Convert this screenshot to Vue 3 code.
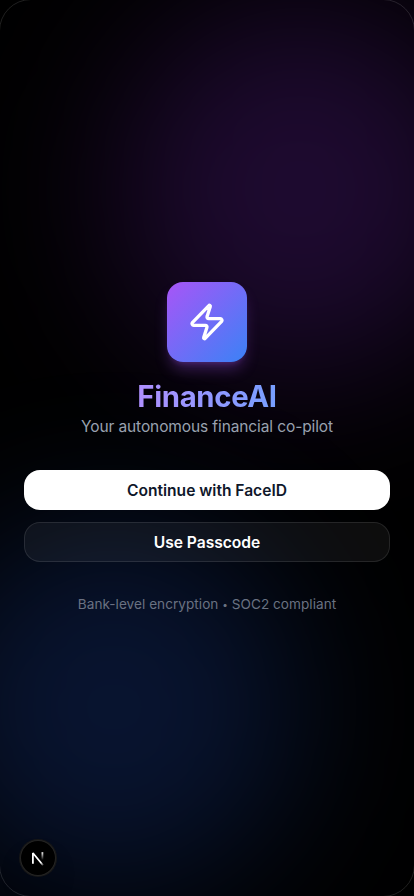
<script setup>
const title = 'FinanceAI'
</script>

<template>
  <div class="device">
    <div class="glow glow-purple"></div>
    <div class="glow glow-blue"></div>
    <main class="content">
      <header class="brand">
        <div class="logo">
          <svg width="40" height="40" viewBox="0 0 24 24" fill="none" stroke="currentColor" stroke-width="2" stroke-linecap="round" stroke-linejoin="round" aria-hidden="true">
            <path d="M4 14a1 1 0 0 1-.78-1.63l9.9-10.2a.5.5 0 0 1 .86.46l-1.92 6.02A1 1 0 0 0 13 10h7a1 1 0 0 1 .78 1.63l-9.9 10.2a.5.5 0 0 1-.86-.46l1.92-6.02A1 1 0 0 0 11 14z" />
          </svg>
        </div>
        <div class="heading">
          <h1>{{ title }}</h1>
          <p class="tagline">Your autonomous financial co-pilot</p>
        </div>
      </header>
      <div class="actions">
        <button class="btn primary">Continue with FaceID</button>
        <button class="btn secondary">Use Passcode</button>
      </div>
      <p class="note">Bank-level encryption <span class="dot">•</span> SOC2 compliant</p>
    </main>
    <div class="frame"></div>
    <div class="dev-badge">
      <svg width="36" height="36" viewBox="0 0 36 36" fill="none" aria-hidden="true">
        <defs>
          <linearGradient id="diag" x1="18" y1="17" x2="24.5" y2="25" gradientUnits="userSpaceOnUse">
            <stop stop-color="#fff" />
            <stop offset=".6" stop-color="#fff" />
            <stop offset="1" stop-color="#fff" stop-opacity="0.1" />
          </linearGradient>
          <linearGradient id="stem" x1="22" y1="12" x2="22" y2="20" gradientUnits="userSpaceOnUse">
            <stop stop-color="#fff" />
            <stop offset="1" stop-color="#fff" stop-opacity="0" />
          </linearGradient>
        </defs>
        <path d="M12.9 23.8V13L23 25.3" stroke="url(#diag)" stroke-width="1.8" stroke-linejoin="bevel" />
        <path d="M22.4 12.2V20.5" stroke="url(#stem)" stroke-width="1.8" />
      </svg>
    </div>
  </div>
</template>

<style>
body { background: #000; }
</style>

<style scoped>
.device {
  position: relative;
  box-sizing: border-box;
  width: 100%;
  height: 100vh;
  overflow: hidden;
  display: flex;
  flex-direction: column;
  justify-content: center;
  padding: 0 24px;
  background: #000;
  font-family: Inter, "Liberation Sans", sans-serif;
  color: #fff;
}
.glow {
  position: absolute;
  width: 372px;
  height: 372px;
  border-radius: 50%;
  filter: blur(76px);
}
.glow-purple { top: 3px; right: -72px; background: rgba(147, 51, 234, 0.205); }
.glow-blue { bottom: 3px; left: -72px; background: rgba(37, 99, 235, 0.205); }
.content {
  position: relative;
  display: flex;
  flex-direction: column;
  text-align: center;
}
.brand {
  display: flex;
  flex-direction: column;
  align-items: center;
}
.logo {
  width: 80px;
  height: 80px;
  display: flex;
  align-items: center;
  justify-content: center;
  border-radius: 16px;
  background: linear-gradient(to bottom right, #a855f7, #3b82f6);
  box-shadow: 0 10px 15px -3px rgba(168, 85, 247, 0.3), 0 4px 6px -4px rgba(168, 85, 247, 0.3);
}
.heading { margin-top: 16px; }
h1 {
  margin: 0;
  font-size: 29.3px;
  line-height: 38px;
  font-weight: 700;
  letter-spacing: -0.33px;
  background: linear-gradient(to right, #c68aff, #60a5ff);
  background-clip: text;
  color: transparent;
}
.tagline {
  margin: 0;
  font-size: 15.5px;
  line-height: 22px;
  letter-spacing: -0.11px;
  color: #99a1af;
}
.actions {
  display: flex;
  flex-direction: column;
  gap: 12px;
  margin-top: 32px;
}
.btn {
  box-sizing: border-box;
  height: 40px;
  padding: 2px 0 0;
  border: 0;
  border-radius: 16px;
  font: 600 15.6px/24px Inter, "Liberation Sans", sans-serif;
  letter-spacing: -0.02px;
}
.primary { background: #fff; color: #0f172a; }
.secondary {
  background: rgba(255, 255, 255, 0.05);
  border: 1px solid rgba(255, 255, 255, 0.1);
  color: #fff;
}
.note {
  margin: 32px 0 0;
  font-size: 13.6px;
  line-height: 20px;
  letter-spacing: 0.03px;
  color: #6a7282;
}
.dot { font-size: 10px; vertical-align: 1px; line-height: 1; }
.frame {
  position: absolute;
  inset: -1px;
  border: 1px solid rgba(255, 255, 255, 0.12);
  border-radius: 32px;
  pointer-events: none;
}
.dev-badge {
  position: absolute;
  left: 20px;
  bottom: 20px;
  width: 36px;
  height: 36px;
  border-radius: 50%;
  background: #000;
  box-shadow: 0 0 0 1px #171717, inset 0 0 0 1px rgba(255, 255, 255, 0.14), 0 16px 32px -8px rgba(0, 0, 0, 0.24);
}
</style>
